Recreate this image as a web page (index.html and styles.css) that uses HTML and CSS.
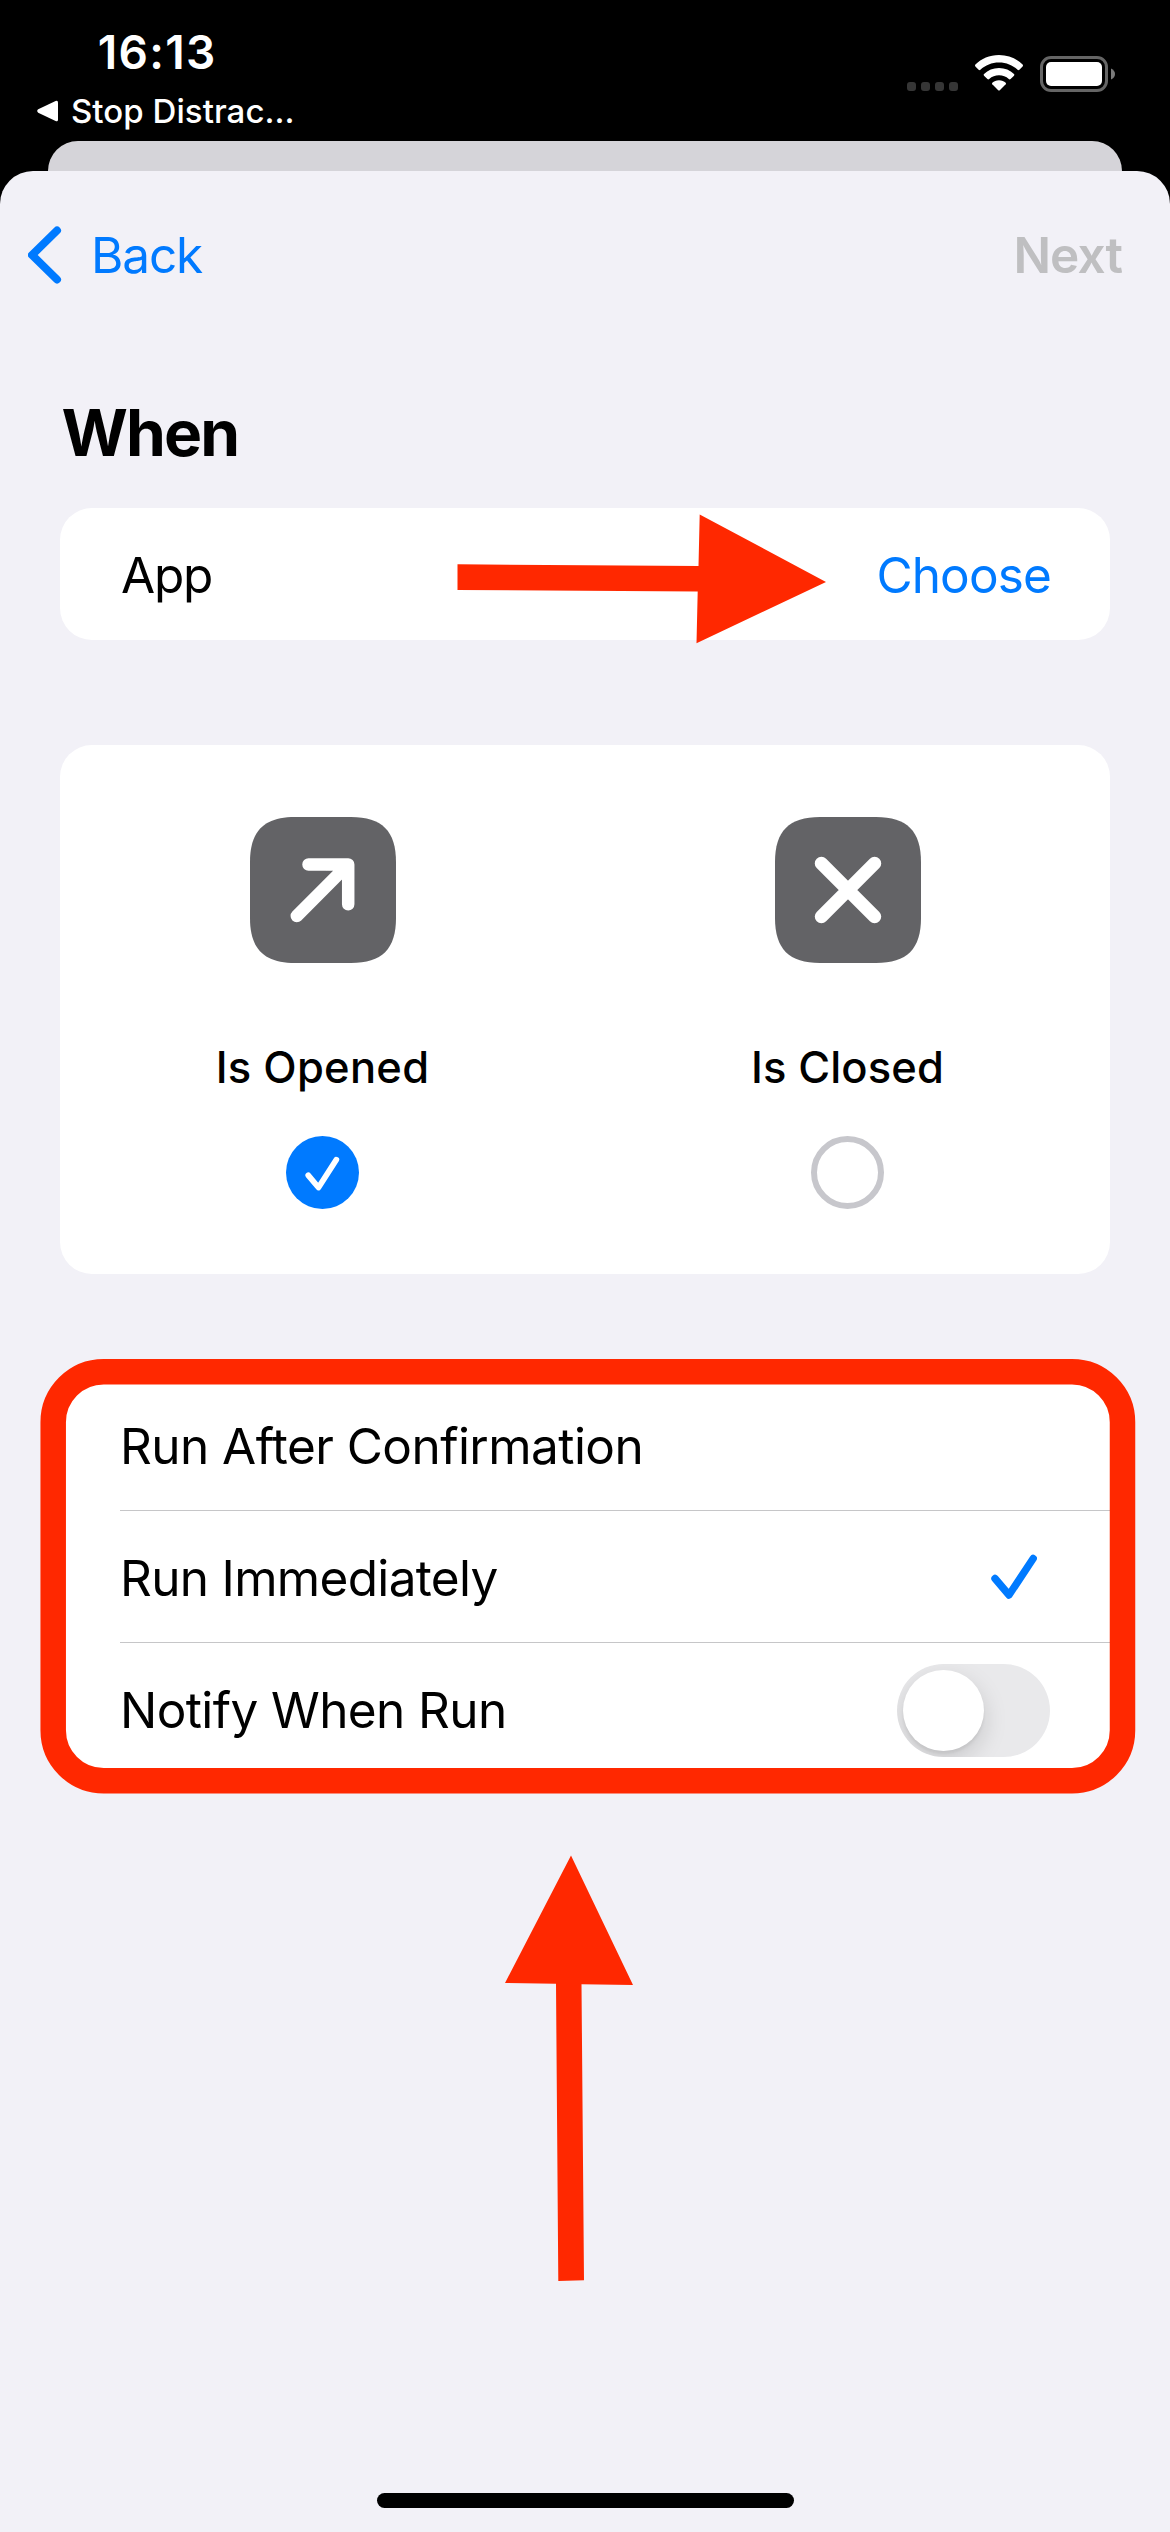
FILE: index.html
```html
<!DOCTYPE html>
<html lang="en">
<head>
<meta charset="utf-8">
<title>New Automation</title>
<link rel="stylesheet" href="styles.css">
</head>
<body>
<div class="screen">
  <header class="status">
    <div class="status-left">
      <div class="time">16:13</div>
      <div class="return">
        <svg class="return-icon" width="22" height="22" viewBox="0 0 22 22"><path d="M1.2 9.3 18.6 1Q21 0 21 2.6V19.4Q21 22 18.6 21L1.2 12.7Q-.8 11 1.2 9.3Z" fill="#fff"/></svg>
        <span>Stop Distrac...</span>
      </div>
    </div>
    <div class="status-right">
      <svg class="cell" width="51" height="9" viewBox="0 0 51 9" fill="#363636"><rect width="9" height="9" rx="3"/><rect x="14" width="9" height="9" rx="3"/><rect x="28" width="9" height="9" rx="3"/><rect x="42" width="9" height="9" rx="3"/></svg>
      <svg class="wifi" width="48" height="36" viewBox="0 0 48 36" fill="#fff">
        <path d="M24 0C33.600 0 41.500 3.600 47.600 9.600Q48.400 10.500 47.600 11.400L44.400 14.800Q43.500 15.600 42.600 14.800C37.500 10.200 31.400 7.600 24 7.600S10.500 10.200 5.400 14.800Q4.500 15.600 3.600 14.800L.4 11.400Q-.4 10.500.4 9.600C6.500 3.600 14.400 0 24 0Z"/>
        <path d="M24 13C30 13 35 15.300 39 19Q39.800 19.900 39 20.700L35.600 24Q34.700 24.800 33.800 24C31 21.600 27.800 20.300 24 20.300S17 21.600 14.200 24Q13.300 24.800 12.400 24L9 20.700Q8.200 19.900 9 19C13 15.300 18 13 24 13Z"/>
        <path d="M24 25.300C26.800 25.300 29 26.200 30.700 27.700Q31.400 28.400 30.700 29.200L24.800 35.200Q24 36 23.200 35.200L17.300 29.200Q16.600 28.400 17.300 27.700C19 26.200 21.200 25.300 24 25.300Z"/>
      </svg>
      <svg class="battery" width="76" height="36" viewBox="0 0 76 36"><rect x="1.500" y="1.500" width="65" height="33" rx="9.500" fill="none" stroke="#656565" stroke-width="3"/><rect x="6" y="6" width="56" height="24" rx="5" fill="#fff"/><path d="M71 12.500Q75 14.500 75 18T71 23.500Z" fill="#7a7a7a"/></svg>
    </div>
  </header>
  <div class="sheet-behind"></div>
  <main class="sheet">
    <nav class="nav">
      <a class="back">
        <svg width="34" height="58" viewBox="0 0 34 58"><path d="M29 4.500 4 29 29 53.500" fill="none" stroke="#007aff" stroke-width="8" stroke-linecap="round" stroke-linejoin="round"/></svg>
        <span>Back</span>
      </a>
      <span class="next">Next</span>
    </nav>
    <h1 class="title">When</h1>
    <section class="card app-card">
      <span class="app">App</span>
      <a class="choose">Choose</a>
    </section>
    <section class="card events">
      <div class="event">
        <svg width="146" height="146" viewBox="0 0 146 146"><path class="tile" d="M45 0H101C132 0 146 14 146 45V101C146 132 132 146 101 146H45C14 146 0 132 0 101V45C0 14 14 0 45 0Z"/><path d="M46.800 99 98 47.700M58.500 47.500H98.200V87.300" fill="none" stroke="#fff" stroke-width="12.500" stroke-linecap="round" stroke-linejoin="round"/><path d="M75 53.800Q82 53.500 87 51.500L94.500 59Q92.200 64 92 71L98 60V50Z" fill="#fff"/></svg>
        <span class="event-name opened">Is Opened</span>
        <svg class="radio" width="73" height="73" viewBox="0 0 73 73"><circle cx="36.500" cy="36.500" r="36.500" fill="#007aff"/><path d="M22.300 39.300 32.500 51.500 50.300 23.700" fill="none" stroke="#fff" stroke-width="5.800" stroke-linecap="round" stroke-linejoin="round"/></svg>
      </div>
      <div class="event">
        <svg width="146" height="146" viewBox="0 0 146 146"><path class="tile" d="M45 0H101C132 0 146 14 146 45V101C146 132 132 146 101 146H45C14 146 0 132 0 101V45C0 14 14 0 45 0Z"/><path d="M46.400 46.400 99.600 99.600M99.600 46.400 46.400 99.600" stroke="#fff" stroke-width="13.300" stroke-linecap="round"/></svg>
        <span class="event-name closed">Is Closed</span>
        <svg class="radio" width="73" height="73" viewBox="0 0 73 73"><circle cx="36.500" cy="36.500" r="33.500" fill="none" stroke="#c7c7cc" stroke-width="6"/></svg>
      </div>
    </section>
    <section class="card options">
      <div class="row"><span class="after">Run After Confirmation</span></div>
      <div class="row"><span class="immediately">Run Immediately</span>
        <svg class="check" width="46" height="46" viewBox="0 0 46 46"><path d="M4 24.500 18 41 42.200 4.500" fill="none" stroke="#007aff" stroke-width="7.400" stroke-linecap="round" stroke-linejoin="round"/></svg>
      </div>
      <div class="row"><span class="notify">Notify When Run</span><span class="toggle"><i class="knob"></i></span></div>
    </section>
  </main>
  <div class="home"></div>
  <svg class="marks" width="1170" height="2532" viewBox="0 0 1170 2532">
    <path d="M457.500 564.300 698.500 566 699.700 514.500 826 582 696.500 643.200 697.700 591.500 457.500 590Z"/>
    <path d="M571 1855.500 633 1985 581.500 1984.200 584 2280.200 558.300 2281 556 1983.700 505 1983Z"/>
    <rect x="53.200" y="1371.700" width="1069.300" height="409" rx="50.500"/>
  </svg>
</div>
</body>
</html>
```
FILE: styles.css
```css
* { box-sizing: border-box; }

body {
  margin: 0;
  background: #000;
  font-family: Inter, "Liberation Sans", sans-serif;
  color: #000;
}

svg { display: block; flex: none; }

.screen {
  position: relative;
  display: flex;
  flex-direction: column;
  width: 1170px;
  height: 2532px;
  overflow: hidden;
  background: #000;
}

.status {
  display: flex;
  justify-content: space-between;
  height: 141px;
  color: #fff;
}

.status-left { padding: 29px 0 0 37px; }

.time {
  padding-left: 60.700px;
  font-size: 46px;
  line-height: 46px;
  font-weight: 600;
  letter-spacing: 1.330px;
}

.return {
  display: flex;
  align-items: center;
  gap: 12px;
  margin-top: 16px;
  font-size: 33px;
  line-height: 40px;
  font-weight: 450;
  letter-spacing: 0.050px;
}

.status-right {
  display: flex;
  align-items: flex-start;
  padding: 55px 54px 0 0;
}

.cell { margin-top: 27px; }
.wifi { margin-left: 17px; }
.battery { margin: 1px 0 0 17px; }

.sheet-behind {
  flex: none;
  height: 30px;
  margin: 0 48px;
  border-radius: 30px 30px 0 0 / 30px 30px 0 0;
  background: #d5d4d9;
}

.sheet {
  flex: 1;
  padding: 0 60px;
  border-radius: 33px 33px 0 0;
  background: #f2f1f7;
}

.nav {
  display: flex;
  align-items: center;
  justify-content: space-between;
  height: 168px;
  margin: 0 -12px 0 -32px;
  font-size: 49.500px;
  line-height: 60px;
}

.back {
  display: flex;
  align-items: center;
  gap: 29px;
  color: #007aff;
  letter-spacing: -1.150px;
}

.next {
  font-weight: 600;
  letter-spacing: -0.920px;
  color: #bfbfc1;
}

.title {
  margin: 54px 0 35px 1.500px;
  font-size: 64px;
  line-height: 80px;
  font-weight: 700;
  letter-spacing: -1.860px;
}

.card {
  border-radius: 32px;
  background: #fff;
}

.app-card {
  display: flex;
  align-items: center;
  justify-content: space-between;
  height: 132px;
  padding: 1px 59px 0 61px;
  font-size: 49.500px;
}

.app { letter-spacing: -1.230px; }

.choose {
  letter-spacing: -0.860px;
  color: #007aff;
}

.events {
  display: grid;
  grid-template-columns: 1fr 1fr;
  height: 529px;
  margin-top: 105px;
  padding-top: 72px;
}

.event {
  display: flex;
  flex-direction: column;
  align-items: center;
}

.event-name {
  margin-top: 78px;
  font-size: 43.500px;
  line-height: 52px;
  font-weight: 500;
}

.opened { letter-spacing: 0.260px; }
.closed { letter-spacing: 0.130px; }

.radio { margin-top: 43px; }

.options {
  height: 396px;
  margin-top: 105px;
  padding-left: 60px;
}

.row {
  display: flex;
  align-items: center;
  justify-content: space-between;
  height: 132px;
  padding: 2px 60px 0 0;
  border-bottom: 1px solid #c6c6c8;
  font-size: 49.500px;
}

.row:last-child { border-bottom: 0; }

.after { letter-spacing: -0.550px; }
.immediately { letter-spacing: -0.680px; }
.notify { letter-spacing: -0.600px; }

.check { margin: -1px 13px 0 0; }

.toggle {
  width: 153px;
  height: 93px;
  padding: 6px;
  border-radius: 47px;
  background: #e9e9eb;
  overflow: hidden;
}

.knob {
  display: block;
  width: 81px;
  height: 81px;
  border-radius: 50%;
  background: #fff;
  box-shadow: 0 9px 24px rgba(0, 0, 0, 0.150), 0 3px 3px rgba(0, 0, 0, 0.060);
}

.home {
  position: absolute;
  left: 377px;
  bottom: 24px;
  width: 417px;
  height: 15px;
  border-radius: 8px;
  background: #000;
}

.marks {
  position: absolute;
  inset: 0;
  fill: #ff2800;
}

.marks rect {
  fill: none;
  stroke: #ff2800;
  stroke-width: 25.500px;
}

.tile { fill: #636366; }
```
